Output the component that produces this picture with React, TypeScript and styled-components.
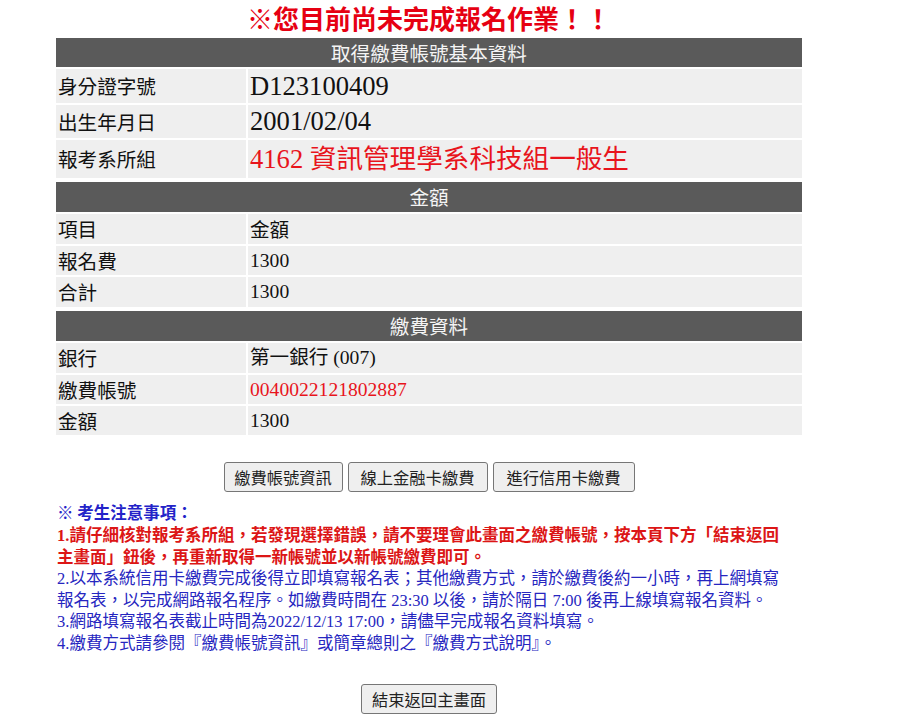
import React from "react";
import styled, { createGlobalStyle } from "styled-components";

const GlobalStyle = createGlobalStyle`
  html, body { margin: 0; padding: 0; background: #fff; }
  body { font-family: "Noto Sans CJK TC", "Noto Sans", sans-serif; }
`;

const SANS = `"Noto Sans CJK TC", "Noto Sans", sans-serif`;
const SERIF = `"Liberation Serif", "Noto Sans CJK TC", serif`;

const Page = styled.div`
  width: 858px;
  padding-top: 3px;
  padding-bottom: 10px;
`;

const Title = styled.div`
  text-align: center;
  font-family: ${SANS};
  font-weight: bold;
  font-size: 26px;
  line-height: 30px;
  color: #e60012;
  margin-bottom: 3px;
`;

const Table = styled.table`
  width: 750px;
  margin: 0 auto;
  border-collapse: separate;
  border-spacing: 2px;
  table-layout: fixed;
`;

const HeadCell = styled.th<{ $h: number }>`
  height: ${(p) => p.$h}px;
  padding: 0;
  background: #5a5a5a;
  color: #f4f4f4;
  font-family: ${SANS};
  font-weight: normal;
  font-size: 19.6px;
  line-height: 1;
  text-align: center;
  vertical-align: middle;
`;

const LabelCell = styled.td<{ $h: number }>`
  height: ${(p) => p.$h}px;
  padding: 0 2px;
  background: #efefef;
  font-family: ${SANS};
  font-size: 19.6px;
  line-height: 1;
  color: #111;
  vertical-align: middle;
`;

const ValueCell = styled.td<{ $h: number; $big?: boolean; $red?: boolean; $cjk?: boolean }>`
  height: ${(p) => p.$h}px;
  padding: 0 2px;
  background: #efefef;
  font-family: ${(p) => (p.$cjk ? SANS : SERIF)};
  font-size: ${(p) => (p.$big ? "26.6px" : "19.6px")};
  line-height: 1;
  color: ${(p) => (p.$red ? "#e8141c" : "#111")};
  vertical-align: middle;
  white-space: nowrap;
`;

const ButtonRow = styled.div`
  display: flex;
  justify-content: center;
  gap: 5px;
  margin-top: 25px;
`;

const Button = styled.button<{ $w: number }>`
  width: ${(p) => p.$w}px;
  height: 30px;
  padding: 0;
  box-sizing: border-box;
  background: #efefef;
  border: 1px solid #767676;
  border-radius: 3px;
  font-family: ${SANS};
  font-size: 16.3px;
  color: #222;
  cursor: pointer;
`;

const Notice = styled.div`
  margin: 8px 0 0 57px;
  width: 738px;
  font-family: ${SERIF};
  font-size: 16.5px;
`;

const NoticeTitle = styled.div`
  line-height: 25px;
  font-family: ${SANS};
  font-weight: bold;
  color: #2323c8;
`;

const Item = styled.div<{ $alert?: boolean }>`
  line-height: 21.5px;
  font-weight: ${(p) => (p.$alert ? "bold" : "normal")};
  color: ${(p) => (p.$alert ? "#dc1616" : "#2626c0")};
`;

const Footer = styled.div`
  display: flex;
  justify-content: center;
  margin-top: 30px;
`;

type Row = { label: string; value: string; h: number; big?: boolean; red?: boolean; cjk?: boolean };

const Section: React.FC<{ title: string; head: number; rows: Row[] }> = ({ title, head, rows }) => (
  <Table>
    <colgroup>
      <col style={{ width: 190 }} />
      <col />
    </colgroup>
    <tbody>
      <tr>
        <HeadCell colSpan={2} $h={head}>{title}</HeadCell>
      </tr>
      {rows.map((r) => (
        <tr key={r.label}>
          <LabelCell $h={r.h}>{r.label}</LabelCell>
          <ValueCell $h={r.h} $big={r.big} $red={r.red} $cjk={r.cjk}>
            {r.value}
          </ValueCell>
        </tr>
      ))}
    </tbody>
  </Table>
);

export default function App() {
  return (
    <>
      <GlobalStyle />
      <Page>
        <Title>※您目前尚未完成報名作業！！</Title>
        <Section
          title="取得繳費帳號基本資料"
          head={29}
          rows={[
            { label: "身分證字號", value: "D123100409", h: 34, big: true },
            { label: "出生年月日", value: "2001/02/04", h: 33, big: true },
            { label: "報考系所組", value: "4162 資訊管理學系科技組一般生", h: 38, big: true, red: true },
          ]}
        />
        <Section
          title="金額"
          head={30}
          rows={[
            { label: "項目", value: "金額", h: 30, cjk: true },
            { label: "報名費", value: "1300", h: 29 },
            { label: "合計", value: "1300", h: 30 },
          ]}
        />
        <Section
          title="繳費資料"
          head={30}
          rows={[
            { label: "銀行", value: "第一銀行 (007)", h: 30 },
            { label: "繳費帳號", value: "0040022121802887", h: 29, red: true },
            { label: "金額", value: "1300", h: 29 },
          ]}
        />
        <ButtonRow>
          <Button $w={119}>繳費帳號資訊</Button>
          <Button $w={140}>線上金融卡繳費</Button>
          <Button $w={142}>進行信用卡繳費</Button>
        </ButtonRow>
        <Notice>
          <NoticeTitle>※ 考生注意事項：</NoticeTitle>
          <Item $alert>
            1.請仔細核對報考系所組，若發現選擇錯誤，請不要理會此畫面之繳費帳號，按本頁下方「結束返回主畫面」鈕後，再重新取得一新帳號並以新帳號繳費即可。
          </Item>
          <Item>
            2.以本系統信用卡繳費完成後得立即填寫報名表；其他繳費方式，請於繳費後約一小時，再上網填寫報名表，以完成網路報名程序。如繳費時間在 23:30 以後，請於隔日 7:00 後再上線填寫報名資料。
          </Item>
          <Item>3.網路填寫報名表截止時間為2022/12/13 17:00，請儘早完成報名資料填寫。</Item>
          <Item>4.繳費方式請參閱『繳費帳號資訊』或簡章總則之『繳費方式說明』。</Item>
        </Notice>
        <Footer>
          <Button $w={136}>結束返回主畫面</Button>
        </Footer>
      </Page>
    </>
  );
}
